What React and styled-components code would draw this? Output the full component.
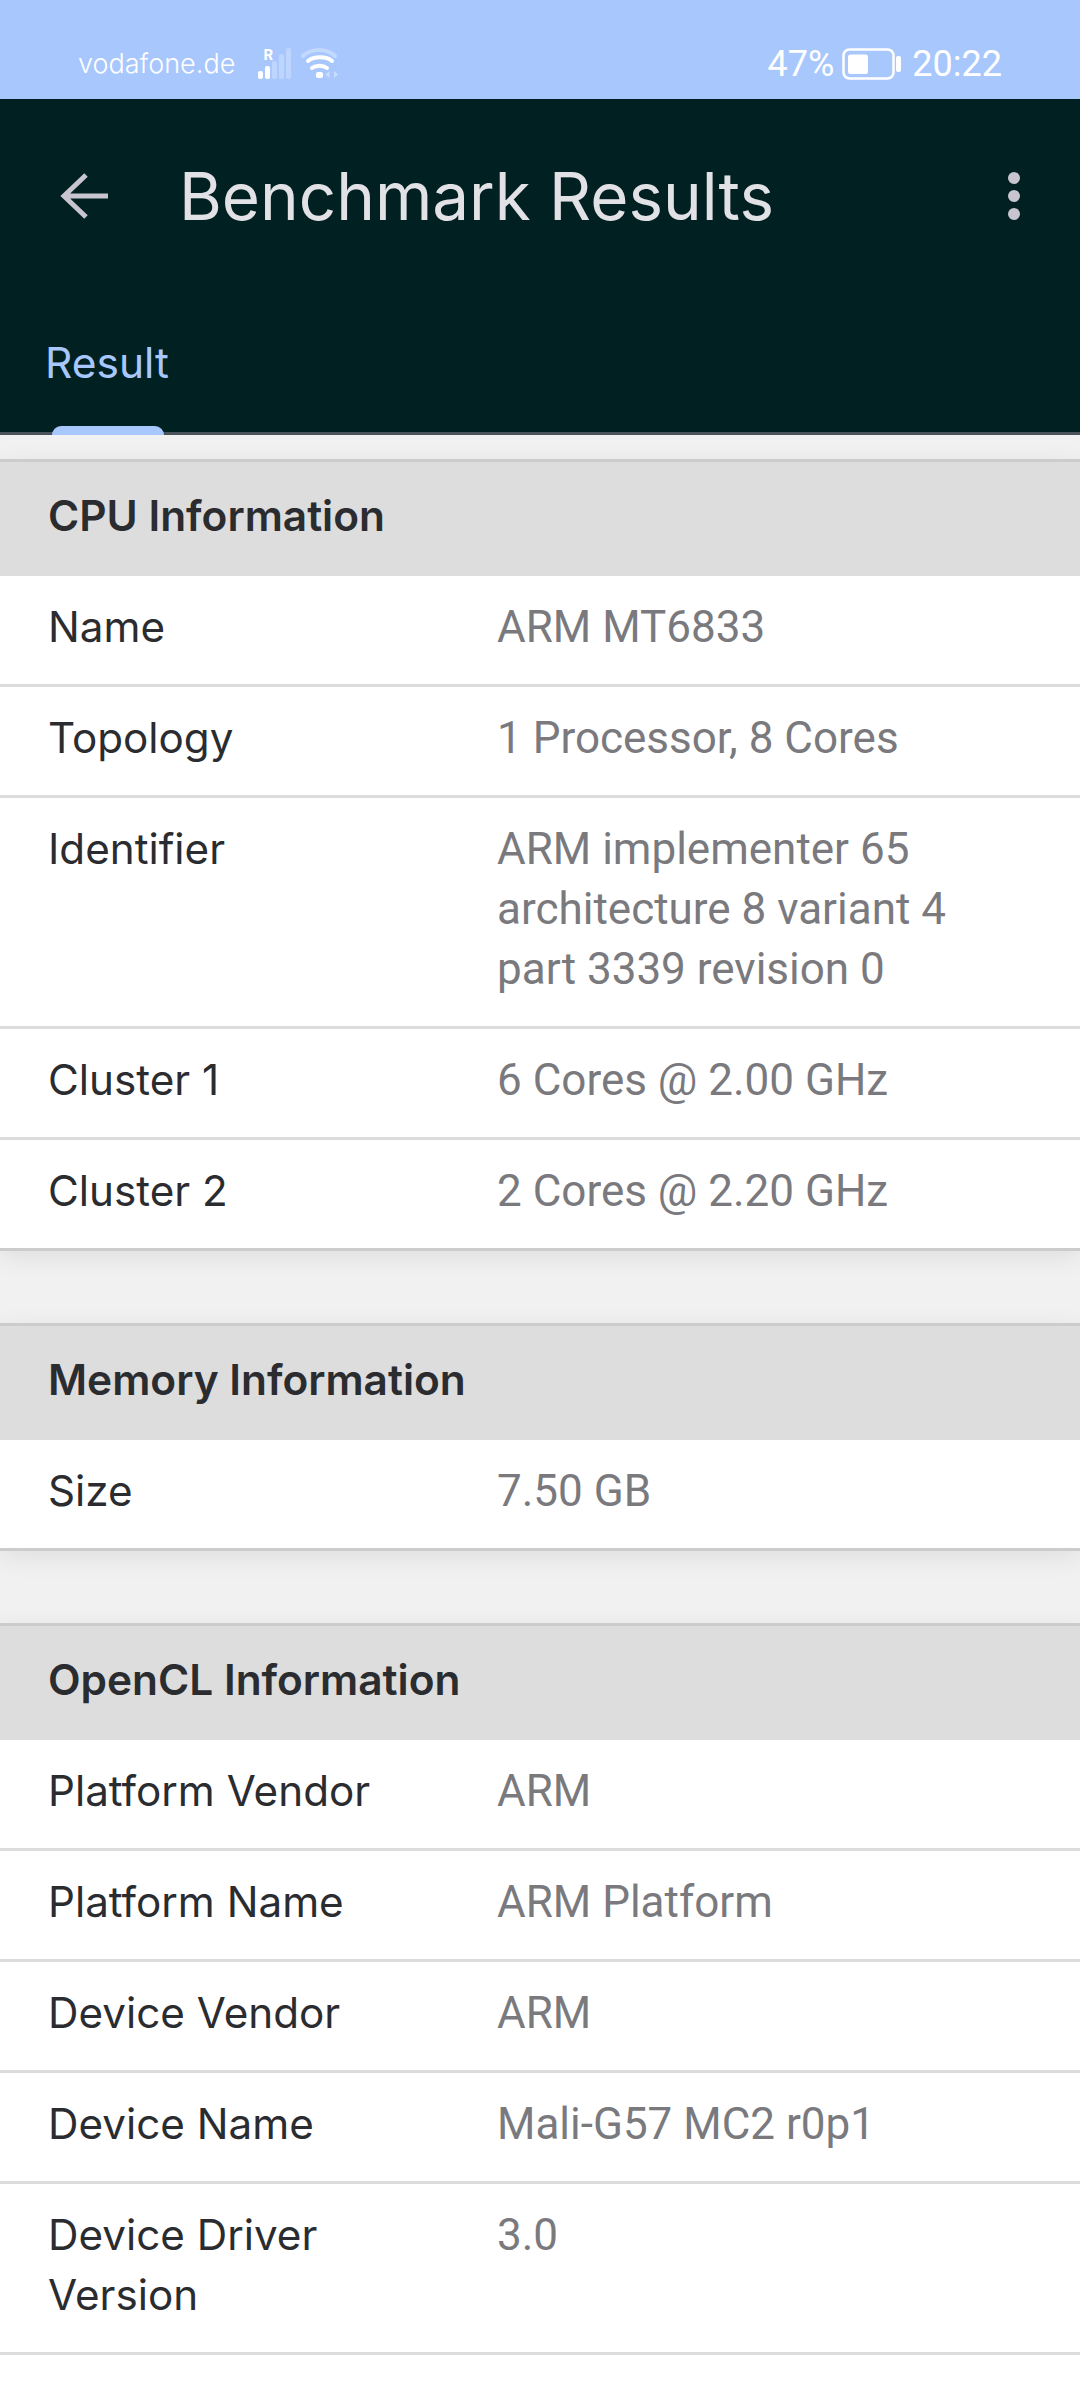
import React from "react";
import styled, { createGlobalStyle } from "styled-components";

const sections = [
  {
    title: "CPU Information",
    rows: [
      ["Name", "ARM MT6833"],
      ["Topology", "1 Processor, 8 Cores"],
      ["Identifier", "ARM implementer 65\narchitecture 8 variant 4\npart 3339 revision 0"],
      ["Cluster 1", "6 Cores @ 2.00 GHz"],
      ["Cluster 2", "2 Cores @ 2.20 GHz"],
    ],
  },
  { title: "Memory Information", rows: [["Size", "7.50 GB"]] },
  {
    title: "OpenCL Information",
    rows: [
      ["Platform Vendor", "ARM"],
      ["Platform Name", "ARM Platform"],
      ["Device Vendor", "ARM"],
      ["Device Name", "Mali-G57 MC2 r0p1"],
      ["Device Driver\nVersion", "3.0"],
      ["", ""],
    ],
  },
];

export default function App() {
  return (
    <Page>
      <GlobalStyle />
      <StatusBar>
        <StatusLeft>
          <Carrier>vodafone.de</Carrier>
          <SignalIcon />
          <WifiIcon />
        </StatusLeft>
        <StatusRight>
          <Percent>47%</Percent>
          <BatteryIcon />
          <Clock>20:22</Clock>
        </StatusRight>
      </StatusBar>
      <AppBar>
        <Toolbar>
          <IconSlot>
            <svg width="50" height="50" viewBox="0 0 50 50" fill="none" stroke="#c8c5d0" strokeWidth="5">
              <path d="M48 25H4M26 4 4 25l22 21" />
            </svg>
          </IconSlot>
          <Title>Benchmark Results</Title>
          <Dots>
            <i />
            <i />
            <i />
          </Dots>
        </Toolbar>
        <Tabs>
          <Tab>Result</Tab>
        </Tabs>
      </AppBar>
      {sections.map(section => (
        <Section key={section.title}>
          <SectionHeader>{section.title}</SectionHeader>
          {section.rows.map(([label, value], i) => (
            <Row key={i}>
              <Label>{label}</Label>
              <Value>{value}</Value>
            </Row>
          ))}
        </Section>
      ))}
    </Page>
  );
}

function SignalIcon() {
  return (
    <svg width="33" height="36" viewBox="0 -5 33 36" fill="#fff">
      <rect x="0" y="23" width="5" height="8" rx="2" />
      <rect x="7" y="18" width="5" height="13" rx="2" />
      <g opacity="0.25">
        <rect x="14" y="13" width="5" height="18" rx="2" />
        <rect x="21" y="6" width="5" height="25" rx="2" />
        <rect x="28" y="0" width="5" height="31" rx="2" />
      </g>
      <text x="5.5" y="11.5" fontSize="15" fontWeight="700" fontFamily="Roboto, sans-serif">R</text>
    </svg>
  );
}

function WifiIcon() {
  return (
    <svg width="38" height="31" viewBox="0 0 38 31" fill="none" stroke="#fff" strokeWidth="4" strokeLinecap="round">
      <path d="M2 8C10 0 26 0 34 8" opacity="0.3" />
      <path d="M7 13c6-5 18-5 24 0" />
      <path d="M11 20c4-3 11-3 15 0" />
      <rect x="15" y="24" width="7" height="6" rx="2" fill="#fff" stroke="none" />
      <path d="M28.5 23l-4 3.5 4 3.5zM33 23l4 3.5-4 3.5z" fill="#fff" stroke="none" opacity="0.4" />
    </svg>
  );
}

function BatteryIcon() {
  return (
    <svg width="60" height="32" viewBox="0 0 60 32" fill="none">
      <rect x="1.5" y="1.5" width="50" height="29" rx="6" stroke="#fff" strokeWidth="2.5" />
      <rect x="6" y="6.5" width="20" height="19.5" rx="2.5" fill="#fff" />
      <rect x="54" y="8" width="5" height="16" rx="2" fill="#fff" />
    </svg>
  );
}

const GlobalStyle = createGlobalStyle`
  html, body {
    margin: 0;
    padding: 0;
    background: #fff;
  }
  * {
    box-sizing: border-box;
  }
`;

const Page = styled.div`
  width: 1080px;
  height: 2388px;
  overflow: hidden;
  font-family: Inter, "Noto Sans", sans-serif;
  background: #f1f1f1;
`;

const StatusBar = styled.div`
  height: 99px;
  padding: 48px 78px 0 78px;
  display: flex;
  justify-content: space-between;
  align-items: flex-start;
  background: #a8c7fd;
  color: #fff;
`;

const StatusLeft = styled.div`
  display: flex;
  align-items: flex-end;
  gap: 10px;
  height: 31px;
  svg {
    display: block;
  }
`;

const Carrier = styled.span`
  font-size: 27px;
  font-weight: 300;
  line-height: 30px;
  margin-right: 13px;
`;

const StatusRight = styled.div`
  display: flex;
  align-items: center;
  height: 32px;
  font-size: 36px;
  font-family: Roboto, sans-serif;
`;

const Percent = styled.span`
  margin-right: 8px;
`;

const Clock = styled.span`
  margin-left: 10px;
`;

const AppBar = styled.div`
  height: 336px;
  background: #002022;
  border-bottom: 3px solid #4a5359;
  display: flex;
  flex-direction: column;
`;

const Toolbar = styled.div`
  height: 194px;
  padding-left: 60px;
  display: flex;
  align-items: center;
`;

const IconSlot = styled.div`
  width: 119px;
  display: flex;
`;

const Title = styled.h1`
  flex: 1;
  margin: 0;
  font-size: 65.5px;
  font-weight: 400;
  color: #e2e2e6;
`;

const Dots = styled.div`
  width: 72px;
  display: flex;
  flex-direction: column;
  gap: 6px;

  i {
    display: block;
    width: 12px;
    height: 12px;
    border-radius: 50%;
    background: #c8c5d0;
  }
`;

const Tabs = styled.div`
  margin-top: auto;
  padding-left: 45px;
`;

const Tab = styled.div`
  position: relative;
  width: 124px;
  height: 99px;
  font-size: 42.5px;
  line-height: 60px;
  color: #a8c7fd;

  &::after {
    content: "";
    position: absolute;
    left: 7px;
    bottom: -3px;
    width: 112px;
    height: 9px;
    border-radius: 9px 9px 0 0;
    background: #a8c7fd;
  }
`;

const Section = styled.section`
  margin-top: 24px;
  border-top: 3px solid #cccccc;
  background: #fff;
  box-shadow: 0 6px 24px rgba(0, 0, 0, 0.08);

  & + & {
    margin-top: 72px;
  }
`;

const SectionHeader = styled.div`
  height: 114px;
  padding: 0 0 8px 48px;
  display: flex;
  align-items: center;
  font-size: 42.4px;
  font-weight: 600;
  color: #2b2c30;
  background: #dddddd;
`;

const Row = styled.div`
  display: grid;
  grid-template-columns: 449px 1fr;
  padding: 21px 0 27px 48px;
  min-height: 111px;
  font-size: 42.2px;
  line-height: 60px;
  border-bottom: 3px solid #dcdcdc;

  &:last-child {
    border-bottom-color: #cccccc;
  }
`;

const Label = styled.div`
  color: #2b2c30;
  font-weight: 400;
  white-space: pre-line;
`;

const Value = styled.div`
  color: #7a7a7e;
  font-family: Roboto, sans-serif;
  font-size: 44px;
  white-space: pre-line;
`;
